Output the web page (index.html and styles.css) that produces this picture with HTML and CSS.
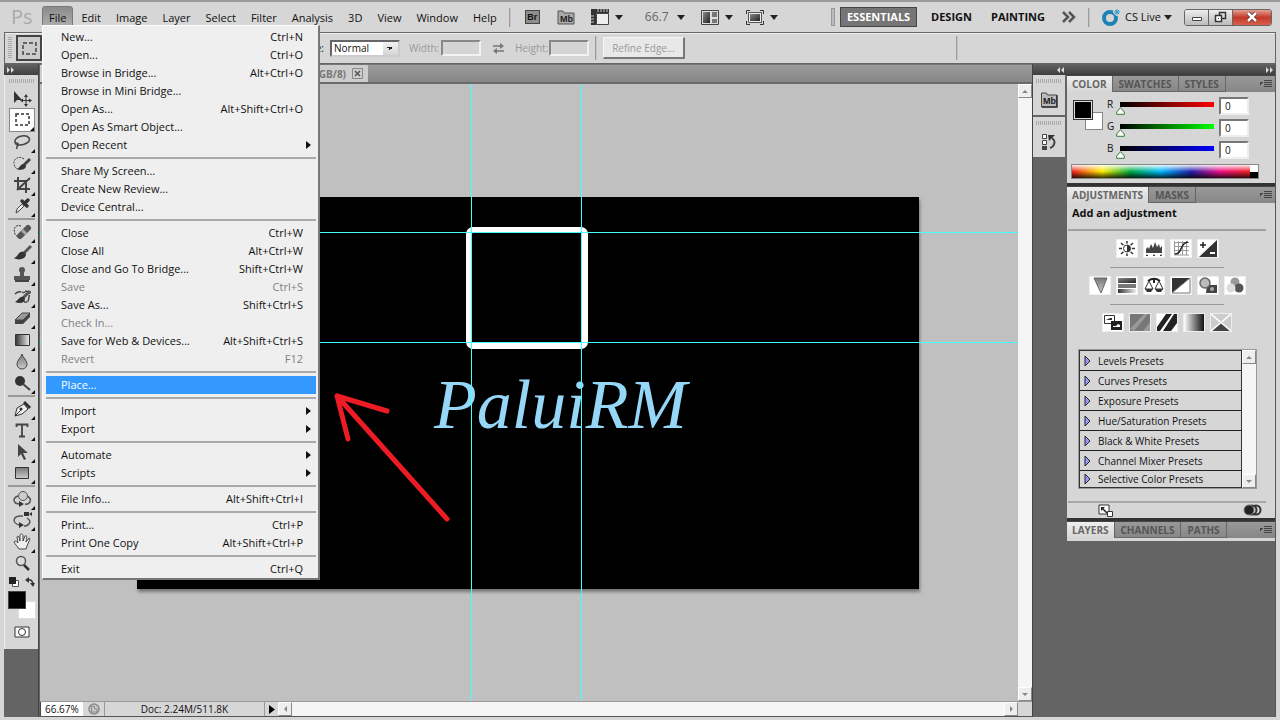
FILE: index.html
```html
<!DOCTYPE html>
<html lang="en">
<head>
<meta charset="utf-8">
<title>Image editor</title>
<link rel="stylesheet" href="styles.css">
</head>
<body>
<svg class="defs" aria-hidden="true">
  <defs>
    <linearGradient id="gv" x1="0" y1="0" x2="0" y2="1"><stop offset="0" stop-color="#777"/><stop offset="1" stop-color="#ccc"/></linearGradient>
    <linearGradient id="gh" x1="0" y1="0" x2="1" y2="0"><stop offset="0" stop-color="#333"/><stop offset="1" stop-color="#eee"/></linearGradient>
    <linearGradient id="gw" x1="0" y1="0" x2="1" y2="0"><stop offset="0" stop-color="#fff"/><stop offset="1" stop-color="#111"/></linearGradient>
    <linearGradient id="gd" x1="0" y1="0" x2="1" y2="1"><stop offset="0" stop-color="#888"/><stop offset="1" stop-color="#222"/></linearGradient>
  </defs>
</svg>
<header class="menubar">
  <span class="logo">Ps</span>
  <nav class="menus">
    <button class="open">File</button><button>Edit</button><button>Image</button><button>Layer</button><button>Select</button><button>Filter</button><button>Analysis</button><button>3D</button><button>View</button><button>Window</button><button>Help</button>
  </nav>
  <span class="rule"></span>
  <div class="apptools">
    <button class="br" aria-label="Launch Bridge"><span class="square">Br</span></button>
    <button class="mb" aria-label="Launch Mini Bridge"><svg width="18" height="16" viewBox="0 0 18 16"><path d="M1 15V2h5l1 2h10v11z" fill="#aaa" stroke="#555"/><text x="3" y="13" class="icontext">Mb</text></svg></button>
    <button class="ex" aria-label="View extras"><svg width="18" height="16" viewBox="0 0 18 16"><path d="M0 0h18v4H5v12H0z" fill="#333"/><path d="M5.500 4.500h12v11h-12z" fill="#eee" stroke="#444"/><path d="M7 0v3M10 0v3M13 0v3M16 0v3M0 7h3M0 10h3M0 13h3" stroke="#ccc"/></svg><i class="down"></i></button>
    <button class="zoomlevel">66.7 <i class="down"></i></button>
    <button class="arr" aria-label="Arrange documents"><svg width="18" height="15" viewBox="0 0 18 15"><path d="M.5.500h17v14H.5z" fill="#ddd" stroke="#444"/><path d="M2 2h7v11H2z" fill="url(#gd)"/><path d="M11 2h5v5h-5zM11 9h5v4h-5z" fill="#777"/></svg><i class="down"></i></button>
    <button class="scr" aria-label="Screen mode"><svg width="18" height="15" viewBox="0 0 18 15"><path d="M.5 4V.500H4M14 .500h3.500V4M.5 11v3.500H4M14 14.500h3.500V11" fill="none" stroke="#333"/><path d="M2.500 2.500h13v10h-13z" fill="#eee" stroke="#555"/><path d="M4 4h10v7H4z" fill="url(#gd)"/></svg><i class="down"></i></button>
  </div>
  <div class="workspaces">
    <span class="grab"></span>
    <button class="active">ESSENTIALS</button><button>DESIGN</button><button>PAINTING</button>
    <button class="more" aria-label="More workspaces"><svg width="14" height="12" viewBox="0 0 14 12"><path d="M1 1l5 5-5 5M7 1l5 5-5 5" fill="none" stroke="#555" stroke-width="2.500"/></svg></button>
    <span class="rule"></span>
    <button class="live"><svg width="20" height="18" viewBox="0 0 20 18"><circle cx="8" cy="10" r="6" fill="none" stroke="#1e82b4" stroke-width="4"/><path d="M15 0v8M11 4h8M12.500 1.500l5 5M17.500 1.500l-5 5" stroke="#d6d6d6" stroke-width="2"/><path d="M15 1v6M12 4h6M13 2l4 4M17 2l-4 4" stroke="#2a9aca"/></svg>CS Live<i class="down"></i></button>
    <div class="winbuttons">
      <button aria-label="Minimize"><svg width="12" height="12"><path d="M1.500 6.500h9v3h-9z" fill="#fff" stroke="#444"/></svg></button><button aria-label="Restore"><svg width="13" height="12"><path d="M5.500 1.500h6v6h-6z" fill="#ddd" stroke="#333" stroke-width="1.500"/><path d="M1.500 4.500h6v6h-6z" fill="#fff" stroke="#333" stroke-width="1.500"/><path d="M4 7h1v1H4z" fill="#333"/></svg></button><button class="close" aria-label="Close"><svg width="12" height="12"><path d="M2 2l8 8M10 2l-8 8" stroke="#5a2a25" stroke-width="4"/><path d="M2 2l8 8M10 2l-8 8" stroke="#fff" stroke-width="2.500"/></svg></button>
    </div>
  </div>
</header>

<section class="options">
  <span class="grip-v"></span>
  <button class="current" aria-label="Rectangular marquee tool"><svg width="15" height="13"><path d="M1 1h13v11H1z" fill="none" stroke="#444" stroke-width="1.500" stroke-dasharray="4 2"/></svg></button>
  <label class="style" for="style">Style:</label>
  <select id="style"><option>Normal</option></select>
  <label class="dim" for="w">Width:</label><input id="w" disabled>
  <svg class="swap" width="11" height="11" viewBox="0 0 11 11"><path d="M0 3h8M3 8h8" stroke="#777" stroke-width="1.500"/><path d="M7 0l4 3-4 3zM4 5L0 8l4 3z" fill="#777"/></svg>
  <label class="dim" for="h">Height:</label><input id="h" disabled>
  <span class="rule"></span>
  <button class="refine" disabled>Refine Edge...</button>
  <span class="rule last"></span>
</section>

<main class="work">
  <aside class="toolbox">
    <div class="strip"><svg width="8" height="6"><path d="M0 0l3 3-3 3zM4 0l3 3-3 3z" fill="#ddd"/></svg></div>
    <div class="tools">
      <span class="grip-h"></span>
      <div class="group g6">
        <button class="plain" aria-label="Move"><svg viewBox="0 0 20 18"><path d="M2 2v12l3-3h5z" fill="#333"/><path d="M14 7v9M10 11.500h9" stroke="#333"/><path d="M12 8l2-3 2 3zM12 15l2 3 2-3zM11 9.500l-3 2 3 2zM17 9.500l3 2-3 2z" fill="#333"/></svg></button>
        <button class="sel" aria-label="Marquee"><svg viewBox="0 0 20 18"><path d="M4 3h13v11H4z" fill="none" stroke="#333" stroke-width="1.500" stroke-dasharray="3 2"/></svg></button>
        <button aria-label="Lasso"><svg viewBox="0 0 20 18"><path d="M5 12C1 9 3 4 10 3s10 4 5 7-10 2-11 1 3-2 2 1-2 2-1 4" fill="none" stroke="#444" stroke-width="1.500"/></svg></button>
        <button aria-label="Quick selection"><svg viewBox="0 0 20 18"><path d="M12 4C7 0 1 4 2 9s4 6 7 5" fill="none" stroke="#444" stroke-dasharray="2 1"/><path d="M18 4l-7 7" stroke="#444" stroke-width="3"/><path d="M12 9c-4 0-4 4-7 5 4 2 9 0 9-3z" fill="#333"/></svg></button>
        <button aria-label="Crop"><svg viewBox="0 0 20 18"><path d="M6 1v12h12M2 5h12v12M5 14L18 2" fill="none" stroke="#444" stroke-width="2"/></svg></button>
        <button aria-label="Eyedropper"><svg viewBox="0 0 20 18"><path d="M4 16l1-4 7-7 2 2-7 7z" fill="#eee" stroke="#444"/><path d="M10 4l5 5M12 7l4-4" stroke="#333" stroke-width="3.500" stroke-linecap="round"/></svg></button>
      </div>
      <hr>
      <div class="group g8">
        <button aria-label="Healing brush"><svg viewBox="0 0 20 18"><path d="M9 3C3 1 1 6 3 11c1 2 3 3 4 3" fill="none" stroke="#333" stroke-dasharray="2 1"/><path d="M8 13l8-8" stroke="#555" stroke-width="6" stroke-linecap="round"/><path d="M10 7l4 4" stroke="#aaa" stroke-width="3"/></svg></button>
        <button aria-label="Brush"><svg viewBox="0 0 20 18"><path d="M19 2l-8 8" stroke="#555" stroke-width="3"/><path d="M12 8c-6-1-5 4-10 6 5 3 12 1 12-4z" fill="#333"/></svg></button>
        <button aria-label="Clone stamp"><svg viewBox="0 0 20 18"><circle cx="10" cy="4" r="3" fill="#555"/><path d="M8 5h4v5h6v4H2v-4h6z" fill="#555"/><path d="M3 15h14" stroke="#444" stroke-width="2"/></svg></button>
        <button aria-label="History brush"><svg viewBox="0 0 20 18"><path d="M3 6c5-5 8 0 10-2M13 3l5 1-2 10h-4" fill="none" stroke="#444" stroke-width="1.500" stroke-dasharray="7 1"/><path d="M18 3l-7 7" stroke="#555" stroke-width="3"/><path d="M12 9c-5-1-5 3-9 5 5 2 10 1 10-3z" fill="#333"/></svg></button>
        <button aria-label="Eraser"><svg viewBox="0 0 20 18"><path d="M3 11l7-7h8l-7 7z" fill="#999" stroke="#444"/><path d="M3 11h8v4H3zM11 11l7-7v4l-7 7z" fill="#444"/></svg></button>
        <button aria-label="Gradient"><svg viewBox="0 0 20 18"><path d="M3.500 3.500h14v11h-14z" fill="url(#gh)" stroke="#333"/></svg></button>
        <button aria-label="Blur"><svg viewBox="0 0 20 18"><path d="M10 1c1 4 5 6 5 10a5 5 0 0 1-10 0c0-4 4-6 5-10z" fill="url(#gv)" stroke="#444"/></svg></button>
        <button aria-label="Dodge"><svg viewBox="0 0 20 18"><circle cx="8" cy="7" r="5" fill="#333"/><path d="M11 10l7 6" stroke="#444" stroke-width="2"/></svg></button>
      </div>
      <hr>
      <div class="group g4">
        <button aria-label="Pen"><svg viewBox="0 0 20 18"><path d="M3 16l2-8 7-4 4 5-6 5zM3 16l6-6" fill="#eee" stroke="#333"/><circle cx="9" cy="9" r="1.500" fill="#333"/><path d="M12 2l6 6" stroke="#333" stroke-width="3"/></svg></button>
        <button aria-label="Type"><svg viewBox="0 0 20 18"><path d="M4.500 6V3.500h11V6M10 4v11M7 15.500h6" fill="none" stroke="#444" stroke-width="1.800"/></svg></button>
        <button aria-label="Path selection"><svg viewBox="0 0 20 18"><path d="M6 1v13l3-3 3 6 2-1-3-6h5z" fill="#444"/></svg></button>
        <button aria-label="Rectangle"><svg viewBox="0 0 20 18"><path d="M3.500 3.500h13v11h-13z" fill="url(#gv)" stroke="#333"/></svg></button>
      </div>
      <hr>
      <div class="group g4">
        <button aria-label="3D rotate"><svg viewBox="0 0 20 18"><path d="M6 6C0 8 1 14 8 14M15 6c6 3 3 9-2 8" fill="none" stroke="#555" stroke-width="1.500"/><circle cx="11" cy="6" r="4.500" fill="#ccc" stroke="#555"/><path d="M7 11l5 3-5 3z" fill="#333"/></svg></button>
        <button aria-label="3D orbit"><svg viewBox="0 0 20 18"><path d="M11 5C0 4 0 12 7 14M15 7c6 4 1 8-3 8" fill="none" stroke="#555" stroke-width="1.500"/><path d="M7 11l5 3-5 3zM12 1h5v4h-5zM17 3l3-2v4z" fill="#333"/></svg></button>
        <button aria-label="Hand"><svg viewBox="0 0 20 18"><path d="M7 16c-2-3-4-5-5-7 1-2 3 0 4 1L5 4c1-2 2-1 3 4V2c1-2 2-1 3 0v6l2-5c2-1 2 0 1 6l3-4c2 0 0 3-2 8l-1 3z" fill="#eee" stroke="#444"/></svg></button>
        <button class="plain" aria-label="Zoom"><svg viewBox="0 0 20 18"><circle cx="9" cy="7" r="4.500" fill="#ddd" stroke="#555" stroke-width="1.500"/><path d="M12 11l5 5" stroke="#333" stroke-width="2.500"/></svg></button>
      </div>
      <div class="mini">
        <svg width="10" height="10"><path d="M3.500 3.500h6v6h-6z" fill="#fff" stroke="#555"/><path d="M0 0h7v7H0z" fill="#222"/></svg>
        <svg width="10" height="10"><path d="M2 3c4-1 6 1 6 5" fill="none" stroke="#333" stroke-width="1.500"/><path d="M0 3l4-3v6zM5 6h5l-2 4z" fill="#333"/></svg>
      </div>
      <div class="fgbg"><span class="bg"></span><span class="fg"></span></div>
      <button class="mask" aria-label="Quick mask"><svg width="16" height="12"><path d="M1 1h14v10H1z" fill="#fff" stroke="#333"/><circle cx="8" cy="6" r="3.500" fill="#fff" stroke="#333"/></svg></button>
    </div>
  </aside>

  <section class="document">
    <div class="tabbar"><div class="doctab"><span>(RGB/8)</span><button aria-label="Close tab"><svg width="11" height="11"><path d="M.5.500h10v10H.5z" fill="none" stroke="#888"/><path d="M3 3l5 5M8 3l-5 5" stroke="#555" stroke-width="1.500"/></svg></button></div></div>
    <div class="view">
      <div class="stage">
        <div class="artboard"><div class="frame"></div><span class="sign">PaluiRM</span></div>
        <i class="gl v a"></i><i class="gl v b"></i><i class="gl h a"></i><i class="gl h b"></i>
        <svg class="arrow" width="120" height="132" viewBox="0 0 120 132"><path d="M115 127L5 4M5 4l50 15M5 4l11 43" fill="none" stroke="#ed1c24" stroke-width="5" stroke-linecap="round"/></svg>
      </div>
      <div class="vscroll"><button aria-label="Scroll up"><i class="t up"></i></button><button aria-label="Scroll down"><i class="t dn"></i></button></div>
    </div>
    <footer class="status">
      <input class="pct" aria-label="Zoom" value="66.67%">
      <span class="cell"><svg width="12" height="12"><circle cx="6" cy="6" r="5" fill="#ccc" stroke="#888" stroke-width="1.500"/><path d="M3.500 9V3.500h3V6H9v3z" fill="none" stroke="#888"/></svg></span>
      <span class="doc">Doc: 2.24M/511.8K</span>
      <button class="play" aria-label="Status options"><svg width="6" height="9"><path d="M0 0l6 4.500L0 9z"/></svg></button>
      <div class="hscroll"><button aria-label="Scroll left"><i class="t lf"></i></button><button aria-label="Scroll right"><i class="t rt"></i></button></div>
      <span class="corner"></span>
    </footer>
  </section>

  <aside class="right">
    <div class="strip"><svg width="8" height="6"><path d="M3 0v6L0 3zM7 0v6L4 3z" fill="#ddd"/></svg><svg width="8" height="6"><path d="M0 0l3 3-3 3zM4 0l3 3-3 3z" fill="#ddd"/></svg></div>
    <div class="columns">
      <div class="dock">
        <div class="slot"><span class="grip-h"></span><button aria-label="Mini Bridge"><svg width="18" height="17" viewBox="0 0 18 17"><path d="M1.500 16V2h5l1 2h9v12z" fill="#bbb" stroke="#444"/><path d="M2 16h15V4" fill="none" stroke="#333" stroke-width="1.500"/><text x="3" y="13" class="icontext">Mb</text></svg></button></div>
        <div class="slot"><span class="grip-h"></span><button aria-label="History"><svg width="16" height="18" viewBox="0 0 16 18"><path d="M1.500 1.500h4v4h-4zM1.500 7.500h4v4h-4z" fill="#fff" stroke="#444"/><path d="M1 13h5v4H1z" fill="#444"/><path d="M9 15c5-2 6-7 2-10" fill="none" stroke="#444" stroke-width="2"/><path d="M7 2h7l-6 6z" fill="#333"/></svg></button></div>
      </div>
      <div class="panels">
        <section class="panel">
          <div class="tabs"><button class="on">COLOR</button><button>SWATCHES</button><button>STYLES</button><i class="flyout"></i></div>
          <div class="colorbody">
            <div class="sliders">
              <div class="swatch"><span class="bg"></span><span class="fg"></span></div>
              <div class="rows">
                <div class="row"><label for="r">R</label><input class="r" id="r" type="range" min="0" max="255" value="0"><input class="num" aria-label="Red value" value="0"></div>
                <div class="row"><label for="g">G</label><input class="g" id="g" type="range" min="0" max="255" value="0"><input class="num" aria-label="Green value" value="0"></div>
                <div class="row"><label for="b">B</label><input class="b" id="b" type="range" min="0" max="255" value="0"><input class="num" aria-label="Blue value" value="0"></div>
              </div>
            </div>
            <div class="ramp"><span class="hues"></span><span class="bw"></span></div>
          </div>
        </section>
        <section class="panel">
          <div class="tabs"><button class="on">ADJUSTMENTS</button><button>MASKS</button><i class="flyout"></i></div>
          <div class="adjbody">
            <h2>Add an adjustment</h2>
            <div class="icons">
              <button aria-label="Brightness/Contrast"><svg viewBox="0 0 20 17"><path d="M10 1v15M2 8.500h16M4 3l12 11M16 3L4 14" stroke="#333" stroke-width="1.500"/><circle cx="10" cy="8.500" r="5" fill="#fff"/><circle cx="10" cy="8.500" r="3.500" fill="#fff" stroke="#333"/><path d="M10 5a3.500 3.500 0 0 1 0 7z" fill="#333"/></svg></button>
              <button aria-label="Levels"><svg viewBox="0 0 20 17"><path d="M2 13V9l2-2 1 2 2-5 2 4 2-6 2 5 2-3 1 4 2-2v7z" fill="#444"/><path d="M2 16l1-2 1 2zM9 16l1-2 1 2zM16 16l1-2 1 2z"/></svg></button>
              <button aria-label="Curves"><svg viewBox="0 0 20 17"><path d="M3.500 1v14H18M7.500 1v14M11.500 1v14M15.500 1v14M3 2.500h15M3 6.500h15M3 10.500h15" fill="none" stroke="#999"/><path d="M4 14c8 0 4-11 13-12" fill="none" stroke="#222" stroke-width="1.500"/></svg></button>
              <button aria-label="Exposure"><svg viewBox="0 0 20 17"><path d="M19 0v17H1z" fill="#333"/><path d="M5 2v6M2 5h6" stroke="#222" stroke-width="1.500"/><path d="M12 13h5" stroke="#fff" stroke-width="2"/></svg></button>
            </div>
            <hr class="short">
            <div class="icons">
              <button aria-label="Vibrance"><svg viewBox="0 0 20 17"><path d="M4 1h13l-6 15z" fill="url(#gv)" stroke="#666"/></svg></button>
              <button aria-label="Hue/Saturation"><svg viewBox="0 0 20 17"><path d="M1 1h18v5H1z" fill="url(#gd)"/><path d="M1 7h18v4H1z" fill="#777"/><path d="M1 12h18v4H1z" fill="url(#gh)"/></svg></button>
              <button aria-label="Color balance"><svg viewBox="0 0 20 17"><path d="M10 1v5M4 4c4-3 8-3 12 0" fill="none" stroke="#222" stroke-width="2"/><path d="M5 4l-4 8h8zM15 4l-4 8h8z" fill="#fff" stroke="#333"/><path d="M1 12h8l-2 3H3zM11 12h8l-2 3h-4z" fill="#333"/></svg></button>
              <button aria-label="Black and white"><svg viewBox="0 0 20 17"><path d="M1 1h18L1 16z" fill="#333"/><path d="M19 1v15H1z" fill="#fff" stroke="#777"/></svg></button>
              <button aria-label="Photo filter"><svg viewBox="0 0 20 17"><path d="M9 8h10v8H8z" fill="#444"/><circle cx="14" cy="12" r="2" fill="#aaa"/><circle cx="7" cy="6" r="5" fill="#bbb" stroke="#666" stroke-width="1.500"/></svg></button>
              <button aria-label="Channel mixer"><svg viewBox="0 0 20 17"><circle cx="10" cy="5" r="4.500" fill="#999"/><circle cx="14" cy="11" r="4.500" fill="#555"/><circle cx="6" cy="11" r="4.500" fill="#ddd"/></svg></button>
            </div>
            <hr class="short">
            <div class="icons">
              <button aria-label="Invert"><svg viewBox="0 0 20 17"><path d="M1.500 1.500h10v8h-10z" fill="#fff" stroke="#333"/><path d="M3 6h6V4H7z" fill="#333"/><path d="M8 7h11v9H8z" fill="#222"/><path d="M10 13h7v-2l-2-1-2 2h-3z" fill="#fff"/></svg></button>
              <button aria-label="Posterize"><svg viewBox="0 0 20 17"><path d="M0 0h20v17H0z" fill="#777"/><path d="M0 15L14 0h4L4 17zM13 17l7-9v9z" fill="#999"/></svg></button>
              <button aria-label="Threshold"><svg viewBox="0 0 20 17"><path d="M0 17V13L9 0h6L3 17zM6 17L17 0h3v9l-6 8z" fill="#222"/></svg></button>
              <button aria-label="Gradient map"><svg viewBox="0 0 20 17"><path d="M0 0h20v17H0z" fill="url(#gw)"/></svg></button>
              <button aria-label="Selective color"><svg viewBox="0 0 20 17"><path d="M0 0h20v17H0z" fill="#ccc"/><path d="M0 17l10-9 10 9z" fill="#444"/><path d="M0 0l20 17M20 0L0 17" stroke="#fff" stroke-width="1.500"/></svg></button>
            </div>
            <div class="presets">
              <ul>
                <li><button><svg width="7" height="12"><path d="M1 1l5 5-5 5z" fill="#99f" stroke="#222"/></svg>Levels Presets</button></li>
                <li><button><svg width="7" height="12"><path d="M1 1l5 5-5 5z" fill="#99f" stroke="#222"/></svg>Curves Presets</button></li>
                <li><button><svg width="7" height="12"><path d="M1 1l5 5-5 5z" fill="#99f" stroke="#222"/></svg>Exposure Presets</button></li>
                <li><button><svg width="7" height="12"><path d="M1 1l5 5-5 5z" fill="#99f" stroke="#222"/></svg>Hue/Saturation Presets</button></li>
                <li><button><svg width="7" height="12"><path d="M1 1l5 5-5 5z" fill="#99f" stroke="#222"/></svg>Black &amp; White Presets</button></li>
                <li><button><svg width="7" height="12"><path d="M1 1l5 5-5 5z" fill="#99f" stroke="#222"/></svg>Channel Mixer Presets</button></li>
                <li><button><svg width="7" height="12"><path d="M1 1l5 5-5 5z" fill="#99f" stroke="#222"/></svg>Selective Color Presets</button></li>
              </ul>
              <div class="vscroll"><button aria-label="Scroll up"><i class="t up"></i></button><button aria-label="Scroll down"><i class="t dn"></i></button></div>
            </div>
            <div class="adjfoot">
              <svg width="15" height="13"><path d="M1 1h10v9H1z" fill="#fff" stroke="#333"/><path d="M9.500 7.500h5v5h-5z" fill="#fff" stroke="#333"/><path d="M3 3h4L3 7z" fill="#222"/><path d="M4 4l5 5" stroke="#222" stroke-width="1.500"/></svg>
              <svg width="19" height="12"><circle cx="13" cy="6" r="4.500" fill="#ddd" stroke="#333" stroke-width="2"/><circle cx="9" cy="6" r="4.500" fill="#ddd" stroke="#333" stroke-width="2"/><circle cx="6" cy="6" r="5" fill="#222" stroke="#777"/></svg>
            </div>
          </div>
        </section>
        <section class="panel">
          <div class="tabs"><button class="on">LAYERS</button><button>CHANNELS</button><button>PATHS</button><i class="flyout"></i></div>
          <div class="stub"></div>
        </section>
      </div>
    </div>
  </aside>
</main>

<div class="filemenu" role="menu">
  <button>New...<kbd>Ctrl+N</kbd></button>
  <button>Open...<kbd>Ctrl+O</kbd></button>
  <button>Browse in Bridge...<kbd>Alt+Ctrl+O</kbd></button>
  <button>Browse in Mini Bridge...</button>
  <button>Open As...<kbd>Alt+Shift+Ctrl+O</kbd></button>
  <button>Open As Smart Object...</button>
  <button>Open Recent<i class="sub"></i></button>
  <hr>
  <button>Share My Screen...</button>
  <button>Create New Review...</button>
  <button>Device Central...</button>
  <hr>
  <button>Close<kbd>Ctrl+W</kbd></button>
  <button>Close All<kbd>Alt+Ctrl+W</kbd></button>
  <button>Close and Go To Bridge...<kbd>Shift+Ctrl+W</kbd></button>
  <button disabled>Save<kbd>Ctrl+S</kbd></button>
  <button>Save As...<kbd>Shift+Ctrl+S</kbd></button>
  <button disabled>Check In...</button>
  <button>Save for Web &amp; Devices...<kbd>Alt+Shift+Ctrl+S</kbd></button>
  <button disabled>Revert<kbd>F12</kbd></button>
  <hr>
  <button class="hot">Place...</button>
  <hr>
  <button>Import<i class="sub"></i></button>
  <button>Export<i class="sub"></i></button>
  <hr>
  <button>Automate<i class="sub"></i></button>
  <button>Scripts<i class="sub"></i></button>
  <hr>
  <button>File Info...<kbd>Alt+Shift+Ctrl+I</kbd></button>
  <hr>
  <button>Print...<kbd>Ctrl+P</kbd></button>
  <button>Print One Copy<kbd>Alt+Shift+Ctrl+P</kbd></button>
  <hr>
  <button>Exit<kbd>Ctrl+Q</kbd></button>
</div>
</body>
</html>
```
FILE: styles.css
```css
* { box-sizing: border-box; }
body {
  margin: 0;
  height: 100vh;
  display: flex;
  flex-direction: column;
  overflow: hidden;
  background: #d6d6d6;
  border-top: 2px solid #999;
  padding: 0 4px 3px;
  font: 11px/14px "Open Sans", "Noto Sans", sans-serif;
  color: #111;
}
button, input, select, kbd { font: inherit; color: inherit; }
button { border: 0; background: none; padding: 0; display: flex; align-items: center; justify-content: center; white-space: nowrap; }
input { min-width: 0; margin: 0; }
i { display: block; flex: none; }
svg { flex: none; display: block; }
.defs { position: absolute; width: 0; height: 0; }
.icontext { font: bold 9px "Liberation Sans", sans-serif; fill: #222; }
.down { width: 0; border: 4px solid transparent; border-top: 5px solid #222; border-bottom: 0; }
.rule { width: 2px; height: 19px; background: #9b9b9b; border-right: 1px solid #c4c4c4; flex: none; }

/* menu bar */
.menubar { display: flex; align-items: center; height: 30px; flex: none; padding-left: 7px; }
.logo { width: 31px; font-size: 20px; line-height: 24px; color: #aaa; }
.menus { display: flex; }
.menus button { height: 23px; padding: 2px 7px 0 8px; }
.menus .open { background: linear-gradient(#8b8b8b, #b0b0b0); border: 1px solid #777; border-radius: 3px 3px 0 0; padding: 1px 6px 0; }
.menubar > .rule { margin-left: 5px; }
.apptools { display: flex; align-items: center; }
.apptools button { gap: 6px; height: 18px; }
.square { width: 15px; height: 14px; border: 1px solid #444; background: #8d8d8d; font: bold 9px/12px "Liberation Sans", sans-serif; }
.apptools .br { margin-left: 14px; }
.apptools .mb { margin-left: 17px; }
.apptools .ex { margin-left: 16px; }
.apptools .zoomlevel { margin-left: 22px; gap: 8px; color: #666; font-size: 12px; }
.apptools .arr { margin-left: 16px; }
.apptools .scr { margin-left: 13px; }
.workspaces { margin-left: auto; display: flex; align-items: center; }
.grab { width: 4px; height: 18px; border: 1px solid #999; background: #bbb; margin-right: 5px; }
.workspaces > button { font-weight: bold; height: 20px; }
.workspaces .active { background: #757575; border: 1px solid #444; color: #fff; width: 77px; margin-right: 14px; }
.workspaces > button + button { margin-right: 19px; }
.workspaces > .more { margin-left: -2px; }
.workspaces > button.more { margin-right: 12px; }
.workspaces > .live { font-weight: normal; margin: 0 12px; gap: 3px; }
.winbuttons { display: flex; border: 1px solid #666; border-radius: 3px; overflow: hidden; margin-right: 4px; }
.winbuttons button { width: 24px; height: 15px; background: linear-gradient(#eee, #bbb); border-right: 1px solid #666; }
.winbuttons .close { width: 38px; border: 0; background: linear-gradient(#e6a095, #c33a27 50%, #d9604d); }

/* options bar */
.options { display: flex; align-items: center; height: 32px; flex: none; border: 1px solid #666; box-shadow: inset 0 1px #eee; font-size: 10px; }
.grip-v { width: 4px; height: 22px; margin: 0 4px 0 3px; background: repeating-linear-gradient(#aaa 0 1px, #d6d6d6 1px 2px); }
.current { width: 26px; height: 26px; border: 2px solid #444; background: #ccc; }
.style { width: 282px; text-align: right; }
.options select {
  appearance: none;
  margin-left: 6px;
  width: 70px;
  height: 17px;
  padding: 0 2px;
  border: 2px solid;
  border-color: #666 #ccc #ccc #666;
  border-radius: 0;
  line-height: 12px;
  background-color: #fff;
  background-image: linear-gradient(45deg, transparent 50%, #222 50%), linear-gradient(315deg, transparent 50%, #222 50%), linear-gradient(#f2f2f2, #d4d4d4);
  background-size: 3px 3px, 3px 3px, 15px 100%;
  background-position: right 8px center, right 5px center, right;
  background-repeat: no-repeat;
}
.dim { color: #999; margin-left: 9px; width: 32px; }
.options input { width: 40px; height: 16px; border: 2px solid; border-color: #888 #f2f2f2 #f2f2f2 #888; background: #d4d4d4; }
.swap { margin: 0 2px 0 12px; }
.swap + .dim { width: 34px; }
.options .rule { margin-left: 6px; height: 24px; }
.refine { margin-left: 6px; width: 82px; height: 22px; background: #e8e8e8; border: 1px solid #f5f5f5; border-right: 2px solid #777; border-bottom: 2px solid #777; color: #999; }
.options .last { margin-left: auto; margin-right: 317px; }

/* work area */
.work { flex: 1; display: flex; min-height: 0; background: #646464; }
.strip { height: 11px; flex: none; display: flex; align-items: center; background: linear-gradient(#636363, #3e3e3e); }
.grip-h { display: block; width: 26px; height: 4px; background: repeating-linear-gradient(90deg, #aaa 0 1px, #d6d6d6 1px 2px); }
.toolbox { width: 35px; flex: none; border-right: 1px solid #444; }
.toolbox .strip { padding-left: 3px; }
.tools { background: #d6d6d6; border-left: 1px solid #eee; display: flex; flex-direction: column; align-items: center; padding: 4px 0 11px; }
.group { display: flex; flex-direction: column; width: 26px; }
.g6 { height: 130px; margin-top: 4px; }
.g8 { height: 173px; }
.g4 { height: 86px; }
.group button { flex: 1; position: relative; min-height: 0; }
.group svg { width: 20px; height: 18px; }
.group button::after { content: ""; position: absolute; right: 0; bottom: 0; border-left: 4px solid transparent; border-bottom: 4px solid #111; }
.group .plain::after { display: none; }
.group .sel { background: #fff; border: 1px solid #888; }
.tools hr { width: 27px; height: 2px; border: 0; margin: 1px 0; background: #999; flex: none; }
.mini { display: flex; justify-content: space-between; width: 26px; margin-top: 3px; }
.fgbg, .swatch { position: relative; width: 28px; height: 28px; margin-top: 4px; flex: none; }
.fgbg span, .swatch span { position: absolute; width: 18px; height: 18px; }
.fg { left: 0; top: 0; background: #000; border: 1px solid #444; }
.bg { right: 0; bottom: 0; background: #fff; border: 1px solid #ddd; }
.mask { margin-top: 7px; }

/* document */
.document { flex: 1; min-width: 0; display: flex; flex-direction: column; padding-left: 1px; }
.tabbar { height: 20px; flex: none; background: linear-gradient(#9c9c9c, #868686); border-top: 1px solid #777; border-bottom: 2px solid #6a6a6a; display: flex; }
.doctab { width: 328px; background: #cdcdcd; display: flex; align-items: center; justify-content: flex-end; gap: 6px; padding-right: 5px; font-weight: bold; color: #777; font-size: 10px; }
.view { flex: 1; min-height: 0; display: flex; }
.stage { flex: 1; min-width: 0; position: relative; overflow: hidden; background: #c0c0c0; }
.artboard { position: absolute; left: 97px; top: 113px; width: 782px; height: 392px; background: #000; box-shadow: 1px 3px 3px #777; }
.frame { position: absolute; left: 329px; top: 30px; width: 122px; height: 122px; border: 6px solid #fff; border-radius: 7px; }
.sign { position: absolute; left: 297px; top: 168px; font: italic 70px/80px "Liberation Serif", serif; color: #96d7f8; }
.gl { position: absolute; background: #4ff; }
.gl.v { top: 0; bottom: 0; width: 1px; }
.gl.h { left: 0; right: 0; height: 1px; }
.v.a { left: 431px; }
.v.b { left: 541px; }
.h.a { top: 148px; }
.h.b { top: 258px; }
.arrow { position: absolute; left: 292px; top: 308px; }
.vscroll { width: 14px; flex: none; background: #f5f5f5; display: flex; flex-direction: column; justify-content: space-between; }
.vscroll button, .hscroll button { width: 14px; height: 14px; background: #eee; border: 1px solid #fff; border-right-color: #888; border-bottom-color: #888; }
.t { width: 0; height: 0; border: 3px solid transparent; }
.up { border-bottom-color: #888; border-top: 0; }
.dn { border-top-color: #888; border-bottom: 0; }
.lf { border-right-color: #888; border-left: 0; }
.rt { border-left-color: #888; border-right: 0; }
.status { height: 16px; flex: none; display: flex; background: #d6d6d6; border-top: 1px solid #999; border-bottom: 1px solid #555; font-size: 10px; }
.pct { width: 43px; border: 0; border-left: 1px solid #444; background: #fff; padding: 0 4px; }
.cell { width: 22px; display: flex; align-items: center; justify-content: center; border-right: 1px solid #999; }
.doc { width: 160px; text-align: center; border-right: 1px solid #999; }
.play { width: 13px; }
.hscroll { flex: 1; display: flex; justify-content: space-between; background: #f5f5f5; }
.corner { width: 14px; }

/* right side */
.right { width: 244px; flex: none; display: flex; flex-direction: column; border-left: 1px solid #444; border-right: 1px solid #555; }
.right .strip { justify-content: space-between; padding: 0 1px 0 24px; }
.columns { flex: 1; display: flex; gap: 2px; min-height: 0; }
.dock { width: 32px; }
.slot { height: 40px; margin-bottom: 2px; background: #d6d6d6; display: flex; flex-direction: column; align-items: center; gap: 8px; padding-top: 4px; }
.panels { flex: 1; min-width: 0; }
.panel { background: #d6d6d6; margin-bottom: 3px; border-top: 1px solid #444; box-shadow: 0 3px #333; }
.panel:last-child { box-shadow: none; }
.tabs { display: flex; height: 16px; background: linear-gradient(#999, #868686); font-weight: bold; font-size: 10px; }
.tabs button { padding: 0 6px; color: #555; border-right: 1px solid #666; border-bottom: 1px solid #666; }
.tabs .on { background: linear-gradient(#eee, #d6d6d6); border-bottom: 0; color: #666; padding: 0 5px; }
.flyout { margin: 4px 3px 0 auto; width: 12px; height: 8px; background: linear-gradient(135deg, #444 50%, transparent 50%) left 2px / 4px 4px no-repeat, repeating-linear-gradient(#444 0 1px, transparent 1px 2px) right / 8px 100% no-repeat; }
.colorbody { padding: 5px 8px 4px 4px; }
.sliders { display: flex; }
.swatch { margin: 3px 4px 0 2px; width: 30px; height: 30px; }
.swatch .fg { outline: 1px solid #333; border: 1px solid #ddd; left: 1px; top: 1px; }
.swatch .bg { border-color: #888; }
.rows { flex: 1; min-width: 0; display: flex; flex-direction: column; gap: 4px; margin-right: 18px; }
.row { display: flex; align-items: center; height: 18px; font-size: 10px; }
.row label { width: 9px; line-height: 14px; margin-bottom: 4px; }
.row input[type="range"] { appearance: none; flex: 1; height: 18px; background: none; margin-right: 5px; }
.row input::-webkit-slider-runnable-track { height: 18px; border: 0; }
.row .r::-webkit-slider-runnable-track { background: linear-gradient(90deg, #000, #f00) 4px 5px / calc(100% - 4px) 5px no-repeat; }
.row .g::-webkit-slider-runnable-track { background: linear-gradient(90deg, #000, #0f0) 4px 5px / calc(100% - 4px) 5px no-repeat; }
.row .b::-webkit-slider-runnable-track { background: linear-gradient(90deg, #000, #00f) 4px 5px / calc(100% - 4px) 5px no-repeat; }
.row input::-webkit-slider-thumb { appearance: none; width: 9px; height: 8px; margin-top: 10px; border-radius: 0; background: url("data:image/svg+xml,%3Csvg xmlns='http://www.w3.org/2000/svg' width='9' height='8'%3E%3Cpath d='M4.5 .7L8.300 5v2.300H.7V5z' fill='%23fff' stroke='%23367a36'/%3E%3C/svg%3E") no-repeat; }
.num { width: 30px; height: 18px; padding: 0 4px; border: 2px solid; border-color: #777 #eee #eee #777; background: #fff; }
.ramp { display: flex; height: 15px; margin-top: 5px; border: 1px solid #888; width: 188px; }
.hues { flex: 1; background: linear-gradient(rgba(255,255,255,.9), transparent 50%, rgba(0,0,0,.8)), linear-gradient(90deg, #e22, #fe0 17%, #0a4 33%, #0bf 50%, #22a 67%, #e18 83%, #e22); }
.bw { width: 8px; background: linear-gradient(#fff 50%, #000 50%); }
.adjbody { padding: 3px 9px 2px 1px; }
h2 { margin: 0; padding: 0 4px 9px; font-size: 11px; line-height: 14px; border-bottom: 2px solid #a0a0a0; }
.icons { display: flex; justify-content: center; gap: 5px; padding: 8px 0 9px; }
.icons button { width: 22px; height: 19px; border: 1px solid #eee; background: #fff; }
.icons svg { width: 20px; height: 17px; }
.short { width: 114px; height: 1px; margin: 0 auto; border: 0; background: #999; }
.presets { display: flex; margin: 8px 9px 12px 10px; border: 1px solid #999; }
.presets ul { flex: 1; min-width: 0; list-style: none; margin: 0; padding: 0; border: 1px solid #333; }
.presets li { height: 20px; border-bottom: 1px solid #222; }
.presets li:last-child { height: 16px; border: 0; }
.presets li button { width: 100%; height: 100%; justify-content: flex-start; gap: 7px; padding-left: 4px; font-size: 10px; }
.adjfoot { border-top: 2px solid #a8a8a8; display: flex; justify-content: space-between; padding: 1px 4px 0 30px; height: 15px; }
.stub { height: 3px; }

/* File menu */
.filemenu { position: absolute; left: 42px; top: 25px; width: 278px; padding: 2px 2px 0 3px; background: #efefef; border: 1px solid #fff; border-right: 2px solid #777; border-bottom: 2px solid #777; }
.filemenu button { width: 100%; height: 18px; padding: 0 13px 0 15px; justify-content: space-between; }
.filemenu hr { height: 2px; margin: 3px 0; border: 0; background: #aaa; }
.filemenu button:disabled { color: #808080; }
.filemenu .hot { background: #39f; color: #fff; }
.sub { margin-right: -8px; border: 4px solid transparent; border-left: 5px solid #111; border-right: 0; }
```
